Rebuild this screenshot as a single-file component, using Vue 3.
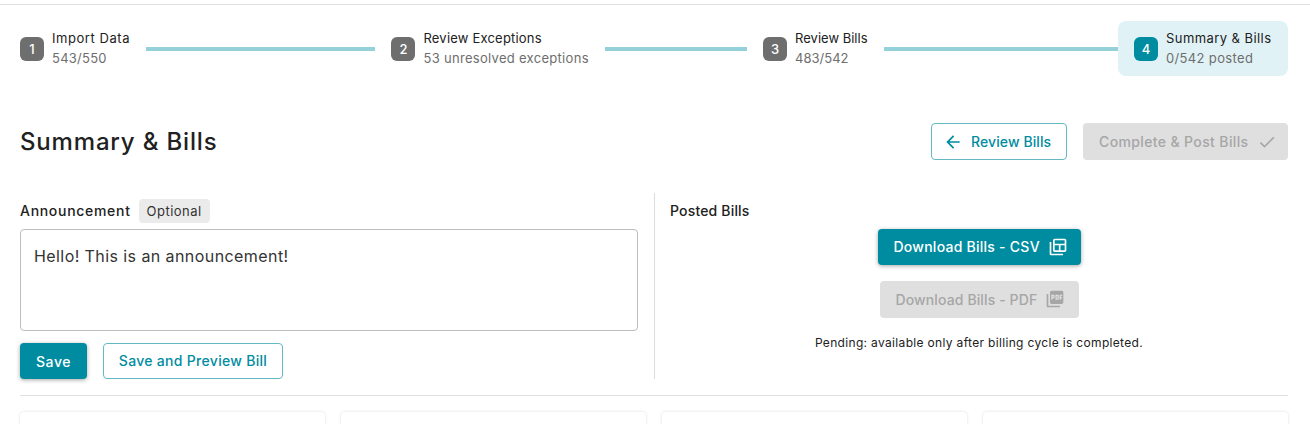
<template>
  <div class="page">
    <!-- Stepper -->
    <div class="stepper">
      <template v-for="s in steps" :key="s.n">
        <div class="step" :class="{ 'step--active': s.active }">
          <span class="step-num">{{ s.n }}</span>
          <div class="step-text">
            <div class="step-title" :style="{ letterSpacing: s.titleLs + 'px' }">{{ s.title }}</div>
            <div class="step-sub" :style="{ letterSpacing: s.subLs + 'px' }">{{ s.sub }}</div>
          </div>
        </div>
        <div v-if="s.line" class="step-line" :style="{ flexGrow: s.line }"></div>
      </template>
    </div>

    <!-- Header -->
    <div class="head">
      <h1 class="head-title">Summary &amp; Bills</h1>
      <div class="head-actions">
        <button class="btn btn-outline btn-back">
          <svg width="20" height="20" viewBox="0 0 24 24" fill="currentColor">
            <path d="M20 11H7.83l5.59-5.59L12 4l-8 8 8 8 1.41-1.41L7.83 13H20v-2z" />
          </svg>
          Review Bills
        </button>
        <button class="btn btn-disabled btn-post">
          Complete &amp; Post Bills
          <svg width="20" height="20" viewBox="0 0 24 24" fill="currentColor">
            <path d="M9 16.17 4.83 12l-1.42 1.41L9 19 21 7l-1.41-1.41z" />
          </svg>
        </button>
      </div>
    </div>

    <!-- Announcement / posted bills -->
    <div class="panel">
      <div class="panel-left">
        <div class="label-row">
          <span class="label label-announce">Announcement</span>
          <span class="chip">Optional</span>
        </div>
        <div class="textbox">Hello! This is an announcement!</div>
        <div class="form-actions">
          <button class="btn btn-primary btn-save">Save</button>
          <button class="btn btn-outline btn-preview">Save and Preview Bill</button>
        </div>
      </div>
      <div class="panel-right">
        <div class="label">Posted Bills</div>
        <div class="downloads">
          <button class="btn btn-primary btn-csv">
            Download Bills - CSV
            <svg width="20" height="20" viewBox="0 0 24 24" fill="currentColor">
              <path d="M4 6H2v14c0 1.100.9 2 2 2h14v-2H4V6zm16-4H8c-1.100 0-2 .9-2 2v12c0 1.100.9 2 2 2h12c1.100 0 2-.9 2-2V4c0-1.100-.9-2-2-2zm0 2v4H8V4h12zm-7 6v6H8v-6h5zm2 6v-6h5v6h-5z" />
            </svg>
          </button>
          <button class="btn btn-disabled btn-pdf">
            Download Bills - PDF
            <svg width="20" height="20" viewBox="0 0 24 24" fill="currentColor">
              <path d="M20 2H8c-1.100 0-2 .9-2 2v12c0 1.100.9 2 2 2h12c1.100 0 2-.9 2-2V4c0-1.100-.9-2-2-2zm-8.500 7.500c0 .83-.67 1.500-1.500 1.500H9v2H7.500V7H10c.83 0 1.500.67 1.500 1.500v1zm5 2c0 .83-.67 1.500-1.500 1.500h-2.500V7H15c.83 0 1.500.67 1.500 1.500v3zm4-3H19v1h1.500V11H19v2h-1.500V7h3v1.500zM9 9.500h1v-1H9v1zM4 6H2v14c0 1.100.9 2 2 2h14v-2H4V6zm10 5.500h1v-3h-1v3z" />
            </svg>
          </button>
          <p class="pending">Pending: available only after billing cycle is completed.</p>
        </div>
      </div>
    </div>

    <div class="rule"></div>

    <div class="cards">
      <div v-for="c in 4" :key="c" class="card"></div>
    </div>
  </div>
</template>

<script setup>
const steps = [
  { n: 1, title: 'Import Data', sub: '543/550', line: 229, titleLs: 0.55, subLs: 0.25 },
  { n: 2, title: 'Review Exceptions', sub: '53 unresolved exceptions', line: 142, titleLs: 0.2, subLs: 0.3 },
  { n: 3, title: 'Review Bills', sub: '483/542', line: 234, titleLs: 0, subLs: 0 },
  { n: 4, title: 'Summary & Bills', sub: '0/542 posted', active: true, titleLs: 0.43, subLs: 0.35 },
]
</script>

<style>
html, body { margin: 0; background: #fff; overflow: hidden; }
</style>

<style scoped>
.page {
  width: 1310px;
  height: 420px;
  box-sizing: border-box;
  padding: 16px 22px 0 20px;
  border-top: 1px solid #e0e0e0;
  margin-top: 4px;
  overflow: hidden;
  font-family: Inter, sans-serif;
  color: #212121;
}

.stepper { display: flex; align-items: center; }

.step { display: flex; align-items: center; gap: 8px; flex: none; margin-right: 16px; }
.step--active {
  margin-right: 0;
  width: 170px;
  padding: 8px 16px;
  height: 55px;
  box-sizing: border-box;
  background: #e0f2f5;
  border-radius: 8px;
}

.step-num {
  width: 24px;
  height: 24px;
  border-radius: 6px;
  background: #6e6e6e;
  color: #fff;
  font-size: 13px;
  font-weight: 500;
  display: flex;
  flex: none;
  align-items: center;
  justify-content: center;
}
.step--active .step-num { background: #008ca0; }

.step-text { margin-bottom: 2px; white-space: nowrap; }
.step-title { font-size: 13px; line-height: 20px; }
.step-sub { font-size: 13px; line-height: 20px; color: #6e6e6e; }

.step-line { height: 4px; flex: 1 1 0; background: #94d1da; margin-right: 16px; }
.step-line:nth-last-child(2) { margin-right: 0; }

.head {
  display: flex;
  align-items: center;
  justify-content: space-between;
  margin-top: 47px;
}
.head-title { margin: 0; font-size: 24px; font-weight: 500; line-height: 37px; letter-spacing: 0.83px; }
.head-actions { display: flex; gap: 16px; }

.btn {
  display: inline-flex;
  align-items: center;
  justify-content: center;
  box-sizing: border-box;
  border-radius: 4px;
  font-family: inherit;
  font-size: 14px;
  font-weight: 500;
  padding: 0;
  cursor: pointer;
  letter-spacing: 0.1px;
}
.btn-primary {
  background: #008ca0;
  color: #fff;
  border: none;
  box-shadow: 0 1px 4px rgba(0, 0, 0, 0.35);
}
.btn-outline { background: #fff; color: #008ca0; border: 1px solid #66b8c5; }
.btn-disabled { background: #dfdfdf; color: #a6a6a6; border: none; cursor: default; }

.btn-back { width: 136px; height: 37px; gap: 8px; justify-content: flex-start; padding-left: 11px; }
.btn-post {
  width: 205px;
  height: 37px;
  gap: 8px;
  justify-content: flex-start;
  padding-left: 16px;
  letter-spacing: 0.37px;
}

.panel { display: flex; margin-top: 33px; height: 186px; }
.panel-left { width: 618px; padding-right: 16px; border-right: 1px solid #dcdcdc; }
.panel-right { flex: 1; padding-left: 15px; }

.label-row { display: flex; align-items: center; gap: 8px; height: 24px; margin-top: 6px; }
.label { font-size: 14px; font-weight: 500; line-height: 24px; letter-spacing: 0.17px; }
.label-announce { letter-spacing: 0.7px; }
.panel-right .label { margin-top: 6px; }

.chip {
  background: #ebebeb;
  border-radius: 4px;
  height: 24px;
  width: 71px;
  font-size: 13px;
  letter-spacing: 0.5px;
  color: #333;
  display: flex;
  align-items: center;
  justify-content: center;
}

.textbox {
  width: 618px;
  height: 102px;
  box-sizing: border-box;
  margin-top: 6px;
  padding: 14px 13px;
  border: 1px solid #bdbdbd;
  border-radius: 4px;
  font-size: 16px;
  line-height: 24px;
  letter-spacing: 0.42px;
  color: #333;
}

.form-actions { display: flex; gap: 16px; margin-top: 12px; }
.btn-save { width: 67px; height: 36px; letter-spacing: 0.6px; }
.btn-preview { width: 180px; height: 36px; letter-spacing: 0.3px; padding-bottom: 2px; }

.downloads { display: flex; flex-direction: column; align-items: center; margin-top: 6px; }
.btn-csv {
  width: 203px;
  height: 36px;
  gap: 8px;
  justify-content: flex-start;
  padding: 0 0 1px 16px;
  letter-spacing: 0.25px;
}
.btn-pdf {
  width: 199px;
  height: 37px;
  gap: 8px;
  justify-content: flex-start;
  padding: 0 0 1px 16px;
  margin-top: 16px;
  letter-spacing: 0.12px;
}
.pending { margin: 17px 0 0; font-size: 12px; line-height: 16px; letter-spacing: 0.33px; color: #212121; }

.rule { height: 1px; background: #e0e0e0; margin-top: 16px; }

.cards { display: grid; grid-template-columns: repeat(4, 305px); gap: 16px; margin-top: 16px; }
.card {
  height: 60px;
  background: #fff;
  border-radius: 4px;
  box-shadow: 0 0 3px rgba(0, 0, 0, 0.14);
}
</style>
